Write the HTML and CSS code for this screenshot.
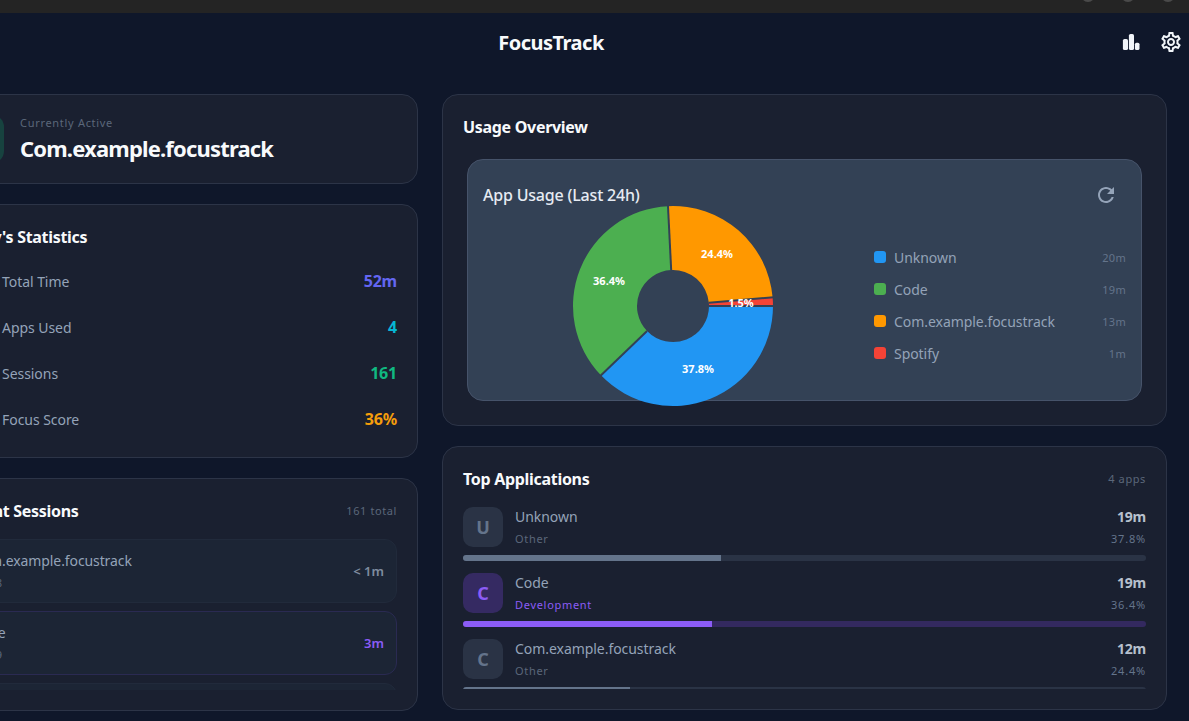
FILE: index.html
```html
<!DOCTYPE html>
<html lang="en">
<head>
<meta charset="utf-8">
<title>FocusTrack</title>
<link rel="stylesheet" href="styles.css">
</head>
<body>
<div class="titlebar"><i></i><i></i><i></i></div>
<div class="app">
  <header class="appbar">
    <span></span>
    <h1>FocusTrack</h1>
    <div class="actions">
      <svg width="24" height="24" viewBox="0 0 24 24" fill="#f1f5f9"><rect x="3.9" y="9" width="5.1" height="11" rx="1.6"/><rect x="9.9" y="4" width="5.1" height="16" rx="1.6"/><rect x="15.9" y="12.7" width="4.6" height="7.3" rx="1.6"/></svg>
      <svg width="24" height="24" viewBox="0 0 24 24" fill="#f1f5f9"><path d="M19.43 12.98c.04-.32.07-.64.07-.98 0-.34-.03-.66-.07-.98l2.11-1.65c.19-.15.24-.42.12-.64l-2-3.46c-.09-.16-.26-.25-.44-.25-.06 0-.12.01-.17.03l-2.49 1c-.52-.4-1.08-.73-1.69-.98l-.38-2.65C14.46 2.18 14.25 2 14 2h-4c-.25 0-.46.18-.49.42l-.38 2.65c-.61.25-1.17.59-1.69.98l-2.49-1c-.06-.02-.12-.03-.18-.03-.17 0-.34.09-.43.25l-2 3.46c-.13.22-.07.49.12.64l2.11 1.65c-.04.32-.07.65-.07.98 0 .33.03.66.07.98l-2.11 1.65c-.19.15-.24.42-.12.64l2 3.46c.09.16.26.25.44.25.06 0 .12-.01.17-.03l2.49-1c.52.4 1.08.73 1.69.98l.38 2.65c.03.24.24.42.49.42h4c.25 0 .46-.18.49-.42l.38-2.65c.61-.25 1.17-.59 1.69-.98l2.49 1c.06.02.12.03.18.03.17 0 .34-.09.43-.25l2-3.46c.12-.22.07-.49-.12-.64l-2.11-1.65zm-1.98-1.71c.04.31.05.52.05.73 0 .21-.02.43-.05.73l-.14 1.13.89.7 1.08.84-.7 1.21-1.27-.51-1.04-.42-.9.68c-.43.32-.84.56-1.25.73l-1.06.43-.16 1.13-.2 1.35h-1.4l-.19-1.35-.16-1.13-1.06-.43c-.43-.18-.83-.41-1.23-.71l-.91-.7-1.06.43-1.27.51-.7-1.21 1.08-.84.89-.7-.14-1.13c-.03-.31-.05-.54-.05-.74s.02-.43.05-.73l.14-1.13-.89-.7-1.08-.84.7-1.21 1.27.51 1.04.42.9-.68c.43-.32.84-.56 1.25-.73l1.06-.43.16-1.13.2-1.35h1.39l.19 1.35.16 1.13 1.06.43c.43.18.83.41 1.23.71l.91.7 1.06-.43 1.27-.51.7 1.21-1.07.85-.89.7.14 1.13zM12 8c-2.21 0-4 1.79-4 4s1.79 4 4 4 4-1.79 4-4-1.79-4-4-4zm0 6c-1.1 0-2-.9-2-2s.9-2 2-2 2 .9 2 2-.9 2-2 2z"/></svg>
    </div>
  </header>
  <main class="columns">
    <div class="col">
      <section class="card active-card">
        <div class="active-icon"></div>
        <div>
          <div class="active-label">Currently Active</div>
          <div class="active-name">Com.example.focustrack</div>
        </div>
      </section>
      <section class="card">
        <h2 class="card-title stats-title">Today's Statistics</h2>
        <div class="stat-list">
          <div class="stat"><span class="stat-icon"></span><span class="stat-label">Total Time</span><b class="stat-value indigo">52m</b></div>
          <div class="stat"><span class="stat-icon"></span><span class="stat-label">Apps Used</span><b class="stat-value cyan">4</b></div>
          <div class="stat"><span class="stat-icon"></span><span class="stat-label">Sessions</span><b class="stat-value green">161</b></div>
          <div class="stat"><span class="stat-icon"></span><span class="stat-label">Focus Score</span><b class="stat-value amber">36%</b></div>
        </div>
      </section>
      <section class="card">
        <div class="card-head">
          <h2 class="card-title">Recent Sessions</h2>
          <span class="card-note">161 total</span>
        </div>
        <div class="session-list">
          <div class="session">
            <div><div class="session-name">Com.example.focustrack</div><div class="session-time">14:38</div></div>
            <b class="session-dur">&lt; 1m</b>
          </div>
          <div class="session session-dev">
            <div><div class="session-name">Code</div><div class="session-time">14:29</div></div>
            <b class="session-dur purple">3m</b>
          </div>
          <div class="session">
            <div><div class="session-name">Code</div><div class="session-time">14:25</div></div>
            <b class="session-dur">&lt; 1m</b>
          </div>
        </div>
      </section>
    </div>
    <div class="col">
      <section class="card">
        <h2 class="card-title">Usage Overview</h2>
        <div class="chart-card">
          <div class="chart-head">
            <span class="chart-title">App Usage (Last 24h)</span>
            <svg class="refresh" width="24" height="24" viewBox="0 0 24 24" fill="#94a3b8"><path d="M17.65 6.35C16.2 4.9 14.21 4 12 4c-4.42 0-7.99 3.58-7.99 8s3.57 8 7.99 8c3.73 0 6.84-2.55 7.73-6h-2.08c-.82 2.33-3.04 4-5.65 4-3.31 0-6-2.69-6-6s2.69-6 6-6c1.66 0 3.14.69 4.22 1.78L13 11h7V4l-2.35 2.35z"/></svg>
          </div>
          <div class="chart-body">
            <div class="pie-area">
              <svg class="pie" width="200" height="200" viewBox="0 0 200 200">
                <path fill="#2196f3" d="M200 100A100 100 0 0 1 27.97 169.37L74.07 124.97A36 36 0 0 0 136 100Z"/>
                <path fill="#4caf50" d="M27.97 169.37A100 100 0 0 1 94.98 .13L98.19 64.05A36 36 0 0 0 74.07 124.97Z"/>
                <path fill="#ff9800" d="M94.98 .13A100 100 0 0 1 199.61 91.22L135.86 96.84A36 36 0 0 0 98.19 64.05Z"/>
                <path fill="#f44336" d="M199.61 91.22A100 100 0 0 1 200 100L136 100A36 36 0 0 0 135.86 96.84Z"/>
                <g class="seams">
                  <line x1="136" y1="100" x2="201" y2="100"/>
                  <line x1="74.07" y1="124.97" x2="27.25" y2="170.06"/>
                  <line x1="98.19" y1="64.05" x2="94.93" y2="-.87"/>
                  <line x1="135.86" y1="96.84" x2="200.6" y2="91.13"/>
                </g>
                <text x="125" y="167">37.8%</text>
                <text x="36" y="79">36.4%</text>
                <text x="144" y="52">24.4%</text>
                <text x="168" y="101">1.5%</text>
              </svg>
            </div>
            <ul class="legend">
              <li><i class="dot blue-bg"></i><span class="legend-name">Unknown</span><span class="legend-val">20m</span></li>
              <li><i class="dot green-bg"></i><span class="legend-name">Code</span><span class="legend-val">19m</span></li>
              <li><i class="dot orange-bg"></i><span class="legend-name">Com.example.focustrack</span><span class="legend-val">13m</span></li>
              <li><i class="dot red-bg"></i><span class="legend-name">Spotify</span><span class="legend-val">1m</span></li>
            </ul>
          </div>
        </div>
      </section>
      <section class="card">
        <div class="card-head">
          <h2 class="card-title">Top Applications</h2>
          <span class="card-note">4 apps</span>
        </div>
        <div class="app-list">
          <div class="app-item">
            <div class="app-row">
              <div class="app-icon">U</div>
              <div class="app-info"><div class="app-name">Unknown</div><div class="app-cat">Other</div></div>
              <div class="app-nums"><b class="app-time">19m</b><div class="app-pct">37.8%</div></div>
            </div>
            <div class="track"><div class="fill" style="width:37.8%"></div></div>
          </div>
          <div class="app-item dev">
            <div class="app-row">
              <div class="app-icon">C</div>
              <div class="app-info"><div class="app-name">Code</div><div class="app-cat">Development</div></div>
              <div class="app-nums"><b class="app-time">19m</b><div class="app-pct">36.4%</div></div>
            </div>
            <div class="track"><div class="fill" style="width:36.4%"></div></div>
          </div>
          <div class="app-item">
            <div class="app-row">
              <div class="app-icon">C</div>
              <div class="app-info"><div class="app-name">Com.example.focustrack</div><div class="app-cat">Other</div></div>
              <div class="app-nums"><b class="app-time">12m</b><div class="app-pct">24.4%</div></div>
            </div>
            <div class="track"><div class="fill" style="width:24.4%"></div></div>
          </div>
        </div>
      </section>
    </div>
  </main>
</div>
</body>
</html>
```
FILE: styles.css
```css
* { box-sizing: border-box; }
html, body { margin: 0; height: 721px; overflow: hidden; }
body { background: #0f172a; font-family: "Noto Sans", "Open Sans", sans-serif; color: #f1f5f9; }
h1, h2, ul { margin: 0; padding: 0; }

.titlebar { height: 13px; background: #242424; display: flex; justify-content: flex-end; gap: 26px; padding-right: 14px; overflow: hidden; }
.titlebar i { width: 14px; height: 14px; border-radius: 50%; background: #4a4a4a; margin-top: -12px; }

.app { width: 1276px; margin-left: -87px; }
.appbar { height: 58px; display: grid; grid-template-columns: 1fr auto 1fr; align-items: center; }
.appbar h1 { font-size: 20px; font-weight: 700; line-height: 26px; letter-spacing: -.5px; color: #f8fafc; padding-top: 2px; }
.actions { display: flex; justify-content: flex-end; gap: 16px; padding-right: 6px; }
.actions svg { display: block; }

.columns { display: grid; grid-template-columns: 483px 725px; gap: 24px; padding: 23px 22px 0; }
.col { display: flex; flex-direction: column; gap: 20px; }

.card { background: #1a2030; border: 1px solid #2c3447; border-radius: 16px; padding: 20px; }
.card-title { font-size: 16px; line-height: 24px; font-weight: 700; color: #f8fafc; letter-spacing: -.3px; }
.card-head { display: flex; justify-content: space-between; align-items: center; }
.card-note { font-size: 11px; letter-spacing: .6px; color: #5b677a; padding-bottom: 2px; }

.active-card { display: flex; align-items: center; gap: 16px; height: 90px; }
.active-icon { width: 48px; height: 48px; border-radius: 12px; background: #17423f; flex: none; }
.active-label { font-size: 11px; line-height: 14px; letter-spacing: .7px; color: #5b677a; padding-top: 1px; box-sizing: content-box; }
.active-name { font-size: 22px; line-height: 30px; font-weight: 700; margin-top: 3px; letter-spacing: -.83px; color: #f8fafc; }

.stats-title { margin-bottom: 14px; }
.stat-list { display: flex; flex-direction: column; gap: 10px; }
.stat { display: flex; align-items: center; gap: 10px; height: 36px; }
.stat-icon { width: 36px; height: 36px; border-radius: 10px; background: #252d40; flex: none; }
.stat-label { flex: 1; font-size: 14px; color: #94a3b8; letter-spacing: -.05px; }
.stat-value { font-size: 16px; font-weight: 700; letter-spacing: -.2px; }
.indigo { color: #6366f1; }
.cyan { color: #06b6d4; }
.green { color: #10b981; }
.amber { color: #f59e0b; }
.purple { color: #8b5cf6; }

.session-list { margin-top: 16px; height: 151px; overflow: hidden; display: flex; flex-direction: column; gap: 8px; }
.session { flex: none; height: 64px; display: flex; justify-content: space-between; align-items: center; padding: 0 12px 0 15px; background: #1c2535; border: 1px solid #212a3b; border-radius: 12px; }
.session-dev { border-color: #2a2a52; }
.session-name { font-size: 14px; line-height: 20px; color: #94a3b8; letter-spacing: -.1px; }
.session-time { font-size: 11px; line-height: 16px; color: #5b677a; margin-top: 4px; letter-spacing: .5px; }
.session-dur { font-size: 13px; font-weight: 600; color: #7f8c9f; }
.session-dur.purple { color: #8b5cf6; }

.chart-card { margin: 20px 4px 4px; height: 242px; padding: 15px; background: #334155; border: 1px solid #46536a; border-radius: 16px; }
.chart-head { display: flex; justify-content: space-between; align-items: center; height: 40px; padding-right: 8px; }
.chart-title { font-size: 16px; font-weight: 500; color: #e6ebf2; letter-spacing: -.2px; }
.refresh { display: block; }
.chart-body { display: flex; gap: 12px; height: 200px; margin-top: -9px; }
.pie-area { flex: 1; display: flex; justify-content: center; }
.pie { overflow: visible; display: block; }
.seams line { stroke: #334155; stroke-width: 2; }
.pie text { font-family: "Noto Sans", sans-serif; font-size: 11px; font-weight: 700; fill: #fff; text-anchor: middle; }
.legend { width: 252px; list-style: none; display: flex; flex-direction: column; justify-content: center; gap: 8px; padding-bottom: 2px; }
.legend li { display: flex; align-items: center; height: 24px; }
.dot { width: 12px; height: 12px; border-radius: 3px; margin-right: 8px; flex: none; }
.blue-bg { background: #2196f3; }
.green-bg { background: #4caf50; }
.orange-bg { background: #ff9800; }
.red-bg { background: #f44336; }
.legend-name { flex: 1; font-size: 14px; color: #94a3b8; letter-spacing: -.05px; }
.legend-val { font-size: 11px; color: #64748b; letter-spacing: .3px; }

.app-list { margin-top: 16px; height: 182px; overflow: hidden; display: flex; flex-direction: column; gap: 12px; }
.app-item { flex: none; display: flex; flex-direction: column; gap: 8px; }
.app-row { height: 40px; display: flex; gap: 12px; }
.app-icon { width: 40px; height: 40px; border-radius: 10px; background: #2a3345; color: #64748b; font-size: 18px; font-weight: 700; display: flex; align-items: center; justify-content: center; flex: none; }
.app-info { flex: 1; }
.app-name { font-size: 14px; line-height: 20px; color: #94a3b8; letter-spacing: -.05px; }
.app-cat { font-size: 11px; line-height: 16px; margin-top: 4px; color: #5b677a; letter-spacing: .7px; }
.app-nums { text-align: right; }
.app-time { display: block; font-size: 14px; line-height: 20px; font-weight: 700; color: #b6c0ce; letter-spacing: -.2px; }
.app-pct { font-size: 11px; line-height: 16px; margin-top: 4px; color: #64748b; letter-spacing: .8px; }
.track { height: 6px; border-radius: 3px; background: #2a3345; overflow: hidden; }
.fill { height: 100%; background: #64748b; }
.dev .app-icon { background: #352a62; color: #8b5cf6; }
.dev .app-cat { color: #8b5cf6; }
.dev .track { background: #33295f; }
.dev .fill { background: #8b5cf6; }
```
